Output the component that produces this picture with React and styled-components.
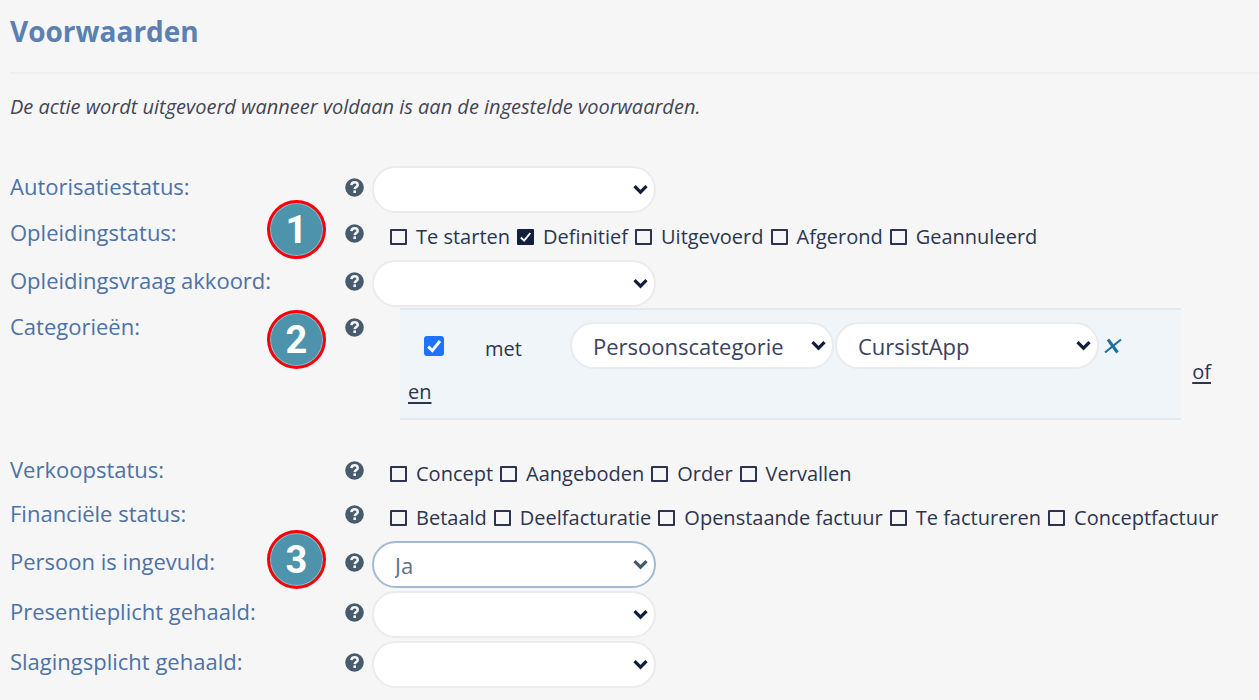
import React from "react";
import styled, { createGlobalStyle, css } from "styled-components";

const GlobalStyle = createGlobalStyle`
  *, *::before, *::after { box-sizing: border-box; }
  body {
    margin: 0;
    background: #f6f6f6;
    color: #2c3550;
    font-family: "Open Sans", "Noto Sans", sans-serif;
    font-size: 20px;
    line-height: 30px;
  }
`;

const Page = styled.main`
  padding: 11px 0 11px 10px;
`;

const Title = styled.h1`
  margin: 0;
  padding-bottom: 21px;
  border-bottom: 2px solid #eeeeee;
  color: #5b80b2;
  font-size: 28px;
  line-height: 40px;
  font-weight: 700;
`;

const Intro = styled.p`
  margin: 18px 0 42px;
  color: #454555;
  font-style: italic;
`;

const Row = styled.div`
  position: relative;
  display: grid;
  grid-template-columns: 335px 27px minmax(0, 1fr);
  align-items: start;
  min-height: ${(p) => (p.$kind === "select" ? 50 : 44)}px;
  ${(p) => p.$kind === "group" && css`padding-bottom: 31px;`}
`;

const Label = styled.label`
  padding-top: ${(p) => (p.$kind === "select" ? 7 : 3)}px;
  color: #4d72a5;
  font-size: 22px;
  white-space: nowrap;
`;

const HelpCell = styled.div`
  padding-top: ${(p) => (p.$kind === "select" ? 8 : 4)}px;
  display: flex;
`;

const HelpButton = styled.button`
  display: flex;
  align-items: center;
  width: 19px;
  height: 30px;
  padding: 0;
  border: 0;
  background: none;
`;

const Badge = styled.span`
  position: absolute;
  left: 257px;
  top: ${(p) => p.$top}px;
  display: flex;
  align-items: center;
  justify-content: center;
  width: 59px;
  height: 59px;
  border: 3px solid #fb0007;
  border-radius: 50%;
  background: #4c93ab;
  box-shadow: inset 0 0 0 1px #8fbccb;
  color: #ffffff;
  font-family: Roboto, sans-serif;
  font-size: 38px;
  font-weight: 700;
`;

const SelectWrap = styled.div`
  position: relative;
  width: ${(p) => p.$width}px;
  max-width: 100%;
  ${(p) => p.$inRow && css`margin-top: 2px;`}
`;

const SelectBox = styled.select`
  appearance: none;
  display: block;
  width: 100%;
  height: 47px;
  padding: 0 36px 0 21px;
  border: 2px solid ${(p) => (p.$active ? "#a3b9d6" : "#e9ebec")};
  border-radius: 24px;
  outline: 0;
  background: #ffffff;
  color: ${(p) => (p.$active ? "#5f7182" : "#3a4260")};
  font: inherit;
  font-size: 22px;
`;

const Chevron = styled.svg`
  position: absolute;
  right: 8px;
  top: 18px;
  width: 15px;
  height: 11px;
  pointer-events: none;
  stroke: ${(p) => (p.$active ? "#435a6e" : "#101d3d")};
`;

const Options = styled.div`
  display: flex;
  flex-wrap: wrap;
  column-gap: 7px;
  padding: 8px 0 0 18px;
`;

const Option = styled.label`
  display: flex;
  align-items: center;
  gap: 9px;
  white-space: nowrap;
`;

const Tick = styled.span`
  position: relative;
  display: flex;
`;

const TickInput = styled.input`
  appearance: none;
  width: 17px;
  height: 16px;
  margin: 0;
  border: 2px solid #2b3350;
  border-radius: 1px;
  &:checked { background: #12203f; border-color: #12203f; }
  ${(p) => p.$blue && css`
    width: 20px;
    height: 20px;
    border-radius: 3px;
    &:checked { background: #1d73fb; border-color: #1d73fb; }
  `}
`;

const TickMark = styled.svg`
  position: absolute;
  inset: 0;
  width: 100%;
  height: 100%;
  pointer-events: none;
`;

const Group = styled.div`
  display: flex;
  align-items: center;
  gap: 11px;
  padding: 0 48px 0 28px;
`;

const Panel = styled.div`
  flex: 1;
  min-width: 0;
  height: 112px;
  padding: 12px 8px 0;
  border-top: 2px solid #e1eaf0;
  border-bottom: 2px solid #e1eaf0;
  background: #eff5f8;
`;

const Condition = styled.div`
  display: flex;
  align-items: center;
  gap: 1px;
  padding-left: 16px;
`;

const Met = styled.span`
  width: 124px;
  padding: 6px 0 0 40px;
`;

const RemoveButton = styled.button`
  display: flex;
  margin-left: 4px;
  padding: 0;
  border: 0;
  background: none;
`;

const TextLink = styled.a`
  color: inherit;
  text-underline-offset: 3px;
  text-decoration-thickness: 2px;
`;

const AndLine = styled.div`
  padding-top: 8px;
`;

const OrLine = styled.div`
  padding-top: 16px;
`;

function Help({ kind, about }) {
  return (
    <HelpCell $kind={kind}>
      <HelpButton type="button" aria-label={`Uitleg ${about}`}>
        <svg width="19" height="19" viewBox="0 0 19 19" fill="none">
          <circle cx="9.5" cy="9.5" r="9.3" fill="#465c6e" />
          <path d="M6.4 7.2C6.6 5.2 7.8 4.3 9.6 4.3c1.9 0 3.1 1 3.1 2.6 0 2.1-2.9 2.1-3 4.2" stroke="#f6f6f6" strokeWidth="2.5" />
          <rect x="8.4" y="12.4" width="2.6" height="2.6" fill="#f6f6f6" />
        </svg>
      </HelpButton>
    </HelpCell>
  );
}

function Select({ id, width, value = "", active, inRow, label }) {
  return (
    <SelectWrap $width={width} $inRow={inRow}>
      <SelectBox id={id} aria-label={label} defaultValue={value} $active={active}>
        <option value={value}>{value}</option>
      </SelectBox>
      <Chevron viewBox="0 0 15 11" fill="none" $active={active}>
        <path d="M1.5 2.2 7.5 8.2 13.5 2.2" strokeWidth="3.2" />
      </Chevron>
    </SelectWrap>
  );
}

function CheckBox({ checked, blue, label }) {
  return (
    <Tick>
      <TickInput type="checkbox" defaultChecked={checked} $blue={blue} aria-label={label} />
      {checked && (
        <TickMark viewBox="0 0 20 20" fill="none">
          <path d="M4.2 10.6 8.3 14.6 16 5" stroke="#ffffff" strokeWidth={blue ? 3 : 2.4} />
        </TickMark>
      )}
    </Tick>
  );
}

function SelectRow({ id, label, value, active, badge, badgeTop }) {
  return (
    <Row $kind="select">
      <Label htmlFor={id} $kind="select">{label}</Label>
      <Help kind="select" about={label} />
      <Select id={id} width={284} value={value} active={active} inRow />
      {badge && <Badge $top={badgeTop}>{badge}</Badge>}
    </Row>
  );
}

function OptionsRow({ label, options, checked, badge, badgeTop }) {
  return (
    <Row $kind="options" role="group" aria-label={label}>
      <Label as="span" $kind="options">{label}</Label>
      <Help kind="options" about={label} />
      <Options>
        {options.map((option) => (
          <Option key={option}>
            <CheckBox checked={option === checked} />
            {option}
          </Option>
        ))}
      </Options>
      {badge && <Badge $top={badgeTop}>{badge}</Badge>}
    </Row>
  );
}

export default function App() {
  return (
    <>
      <GlobalStyle />
      <Page>
        <Title>Voorwaarden</Title>
        <Intro>De actie wordt uitgevoerd wanneer voldaan is aan de ingestelde voorwaarden.</Intro>
        <SelectRow id="autorisatie" label="Autorisatiestatus:" />
        <OptionsRow
          label="Opleidingstatus:"
          options={["Te starten", "Definitief", "Uitgevoerd", "Afgerond", "Geannuleerd"]}
          checked="Definitief"
          badge="1"
          badgeTop={-14}
        />
        <SelectRow id="akkoord" label="Opleidingsvraag akkoord:" />
        <Row $kind="group" role="group" aria-label="Categorieën">
          <Label as="span" $kind="group">Categorieën:</Label>
          <Help kind="group" about="Categorieën:" />
          <Group>
            <Panel>
              <Condition>
                <CheckBox checked blue label="Voorwaarde actief" />
                <Met>met</Met>
                <Select width={264} value="Persoonscategorie" label="Soort categorie" />
                <Select width={264} value="CursistApp" label="Categorie" />
                <RemoveButton type="button" aria-label="Verwijderen">
                  <svg width="18" height="16" viewBox="0 0 18 16" fill="none" stroke="#20709f">
                    <path d="M1 14.5 17 1.5" strokeWidth="2.2" />
                    <path d="M4 1.5 13.5 14.5" strokeWidth="3" />
                  </svg>
                </RemoveButton>
              </Condition>
              <AndLine><TextLink href="#en">en</TextLink></AndLine>
            </Panel>
            <OrLine><TextLink href="#of">of</TextLink></OrLine>
          </Group>
          <Badge $top={2}>2</Badge>
        </Row>
        <OptionsRow label="Verkoopstatus:" options={["Concept", "Aangeboden", "Order", "Vervallen"]} />
        <OptionsRow
          label="Financiële status:"
          options={["Betaald", "Deelfacturatie", "Openstaande factuur", "Te factureren", "Conceptfactuur"]}
        />
        <SelectRow id="persoon" label="Persoon is ingevuld:" value="Ja" active badge="3" badgeTop={-9} />
        <SelectRow id="presentie" label="Presentieplicht gehaald:" />
        <SelectRow id="slaging" label="Slagingsplicht gehaald:" />
      </Page>
    </>
  );
}
